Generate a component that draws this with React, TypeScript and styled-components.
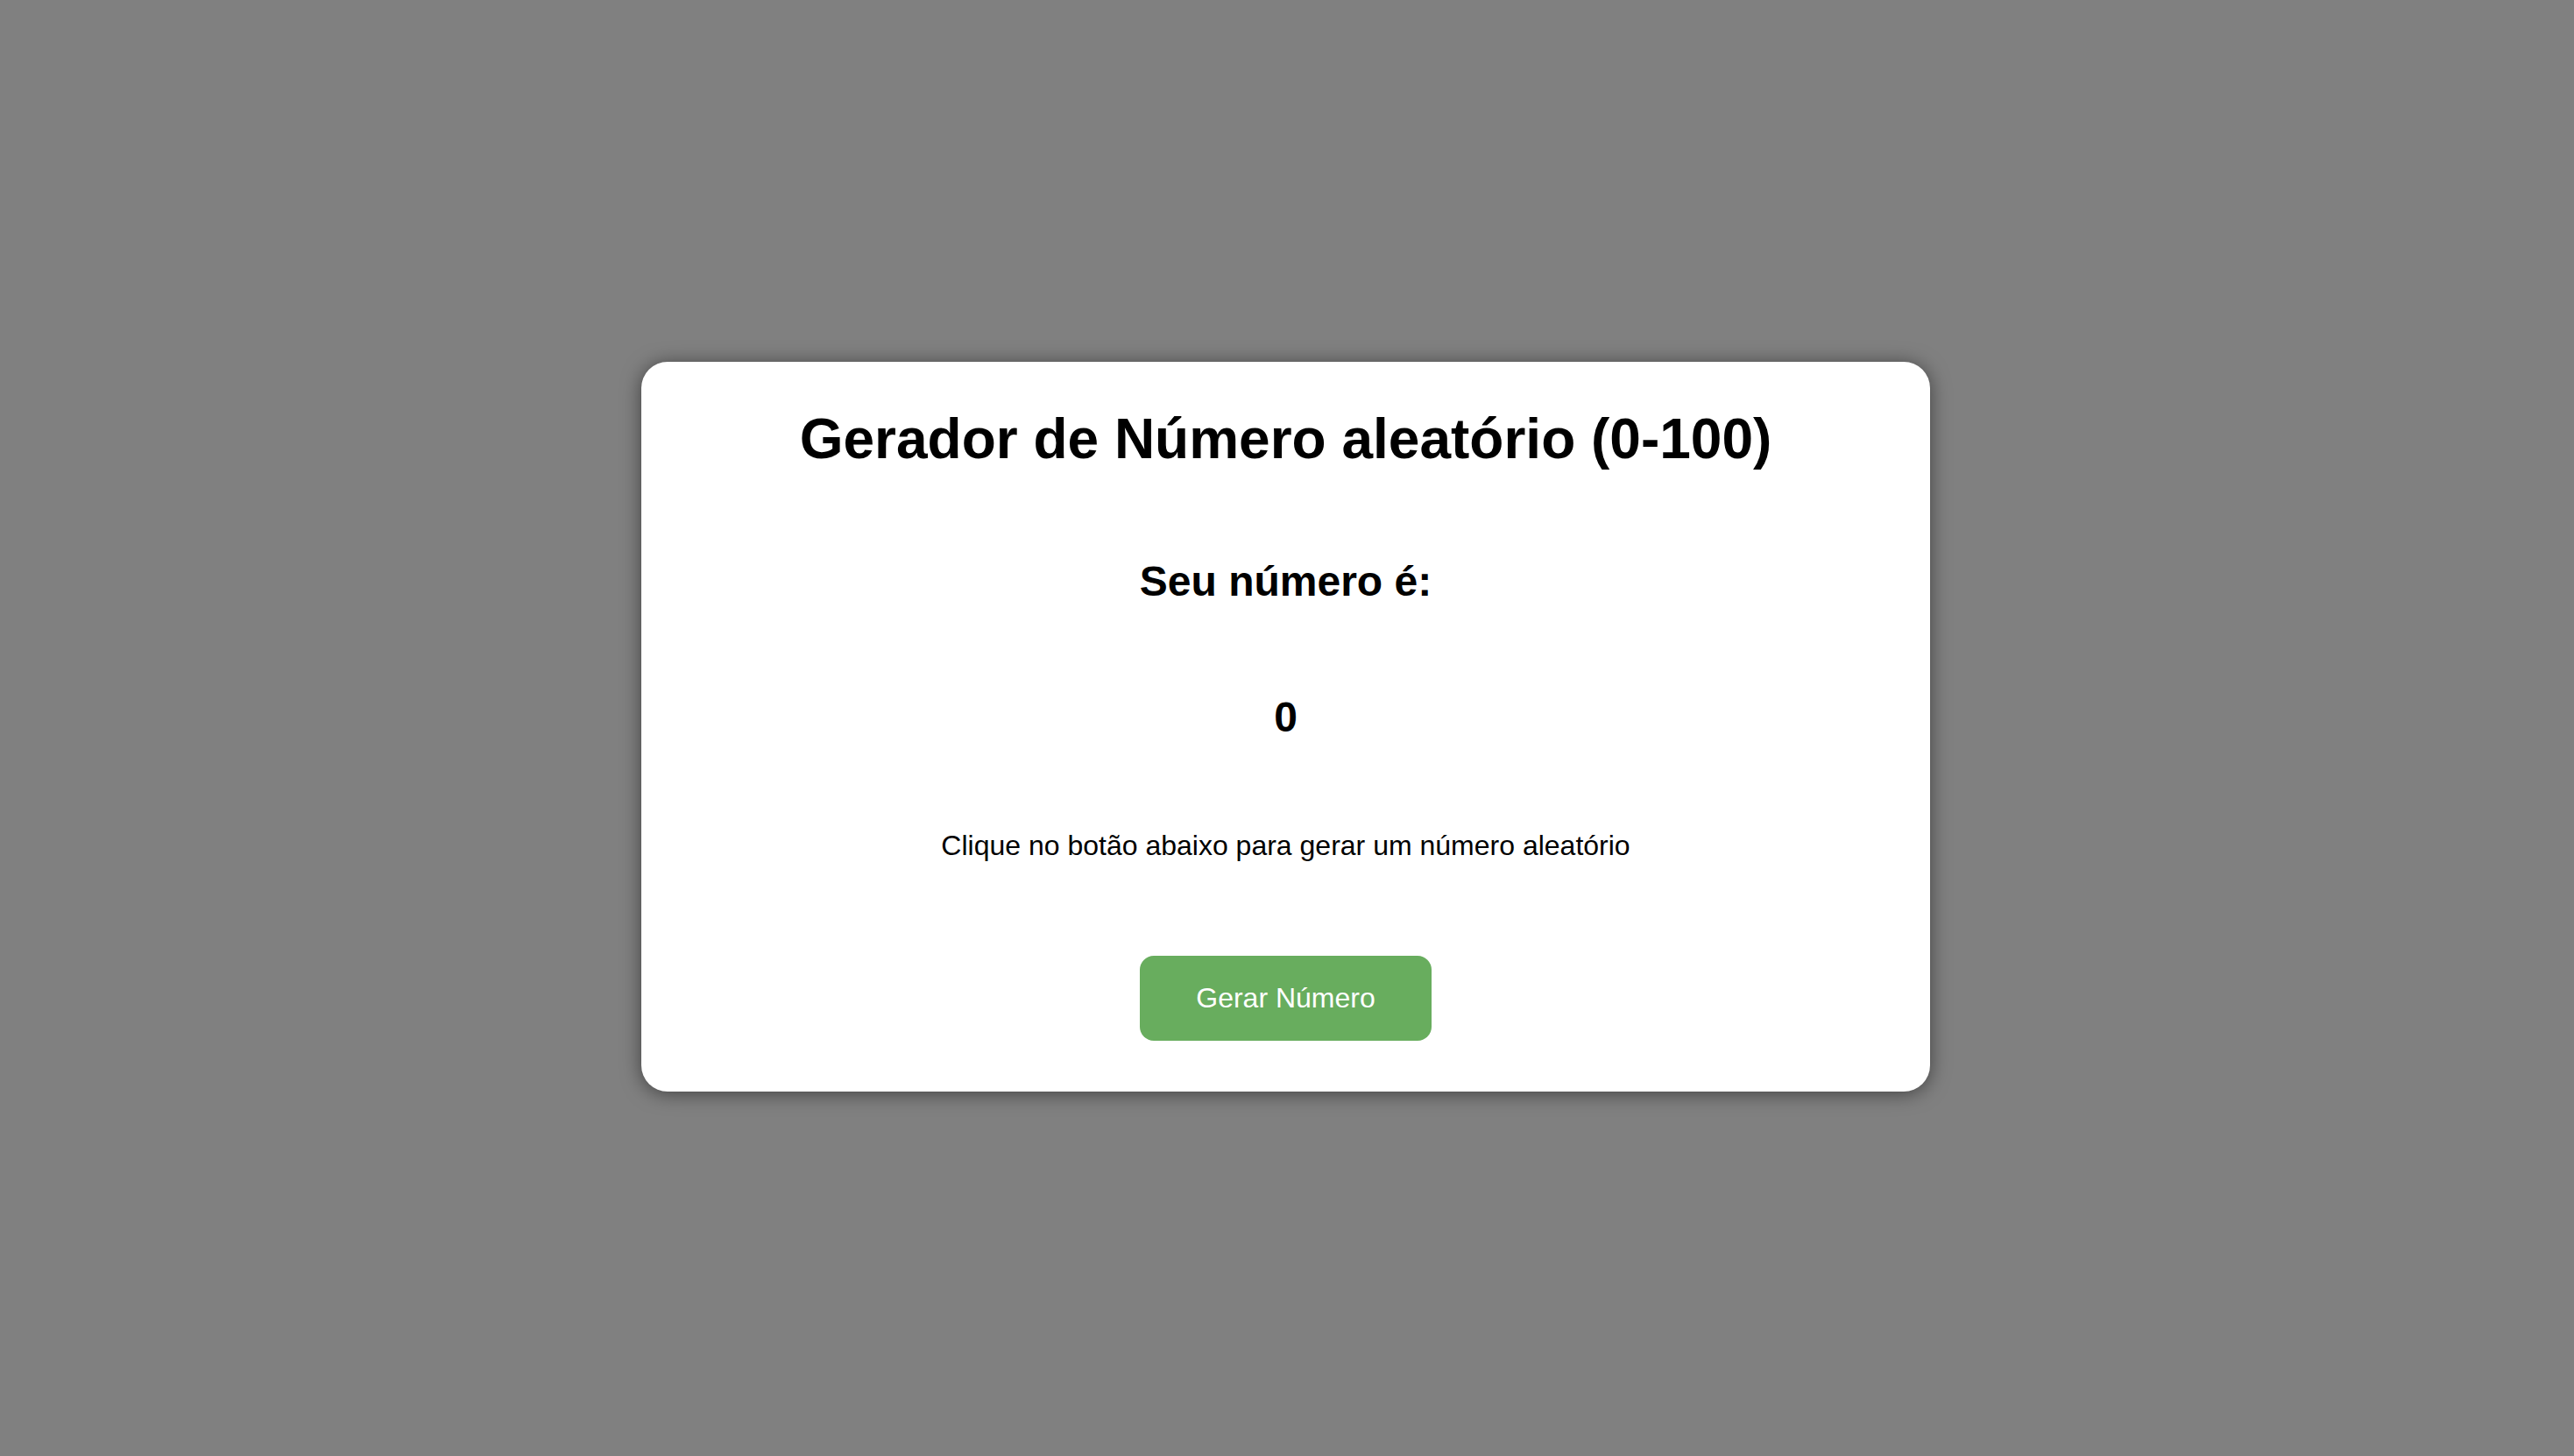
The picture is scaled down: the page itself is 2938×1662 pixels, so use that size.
import React, { useState } from "react";
import styled, { createGlobalStyle } from "styled-components";

const GlobalStyle = createGlobalStyle`
  html, body {
    margin: 0;
    padding: 0;
    background: #808080;
    font-family: "Liberation Sans", Arial, Helvetica, sans-serif;
  }
  * { box-sizing: border-box; }
`;

const Page = styled.main`
  min-height: 100vh;
  display: flex;
  align-items: center;
  justify-content: center;
  padding: 0 3px 3px 0;
  background: #808080;
`;

const Card = styled.section`
  width: 1471px;
  background: #ffffff;
  border-radius: 30px;
  box-shadow: 0 2px 22px rgba(0, 0, 0, 0.5);
  padding: 51px 40px 58px;
  display: flex;
  flex-direction: column;
  align-items: center;
  text-align: center;
  color: #000;
`;

const Title = styled.h1`
  margin: 0;
  font-size: 64px;
  line-height: 74px;
  font-weight: 700;
`;

const Heading = styled.h2<{ $gap: number }>`
  margin: ${(p) => p.$gap}px 0 0;
  font-size: 48px;
  line-height: 56px;
  font-weight: 700;
`;

const Hint = styled.p`
  margin: 100px 0 0;
  font-size: 32px;
  line-height: 37px;
  font-weight: 400;
`;

const Button = styled.button`
  margin-top: 107px;
  height: 97px;
  padding: 0 64px;
  border: none;
  border-radius: 16px;
  background: #68ad5e;
  color: #ffffff;
  font-family: "Liberation Sans", Arial, Helvetica, sans-serif;
  font-size: 32px;
  cursor: pointer;
`;

export default function App() {
  const [num, setNum] = useState(0);
  return (
    <>
      <GlobalStyle />
      <Page>
        <Card>
          <Title>Gerador de Número aleatório (0-100)</Title>
          <Heading $gap={98}>Seu número é:</Heading>
          <Heading $gap={99}>{num}</Heading>
          <Hint>Clique no botão abaixo para gerar um número aleatório</Hint>
          <Button onClick={() => setNum(Math.floor(Math.random() * 101))}>
            Gerar Número
          </Button>
        </Card>
      </Page>
    </>
  );
}
